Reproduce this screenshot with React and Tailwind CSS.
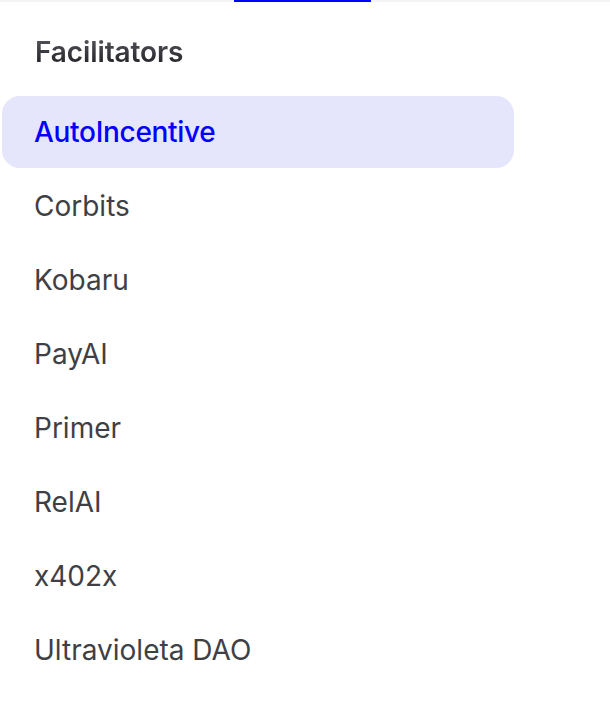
import React from 'react';

const items = ['AutoIncentive', 'Corbits', 'Kobaru', 'PayAI', 'Primer', 'RelAI', 'x402x', 'Ultravioleta DAO'];

const App = () => {
  const active = 'AutoIncentive';

  return (
    <div className="min-h-screen bg-white font-['Inter',sans-serif]">
      {/* top tab strip */}
      <div className="h-[2px] bg-[#f4f4f5]">
        <div className="ml-[234px] h-full w-[137px] bg-[#0000ff]" />
      </div>

      <h2 className="mt-[33px] ml-[35px] inline-block bg-gradient-to-b from-[#5b5b63] to-[#1c1c20] bg-clip-text text-[28px] leading-[34px] font-semibold tracking-[-0.1px] text-transparent">
        Facilitators
      </h2>

      <nav className="mt-[27px] flex flex-col gap-[2px] pl-[2px]">
        {items.map(name => (
          <a
            key={name}
            className={`flex h-[72px] w-[512px] items-center rounded-[18px] pl-[32px] text-[28px] ${
              name === active ? 'bg-[#e5e5fc] text-[#0000ff] font-medium tracking-[-0.3px]' : 'text-[#3f3f46]'
            }`}
          >
            {name}
          </a>
        ))}
      </nav>
    </div>
  );
};

export default App;
